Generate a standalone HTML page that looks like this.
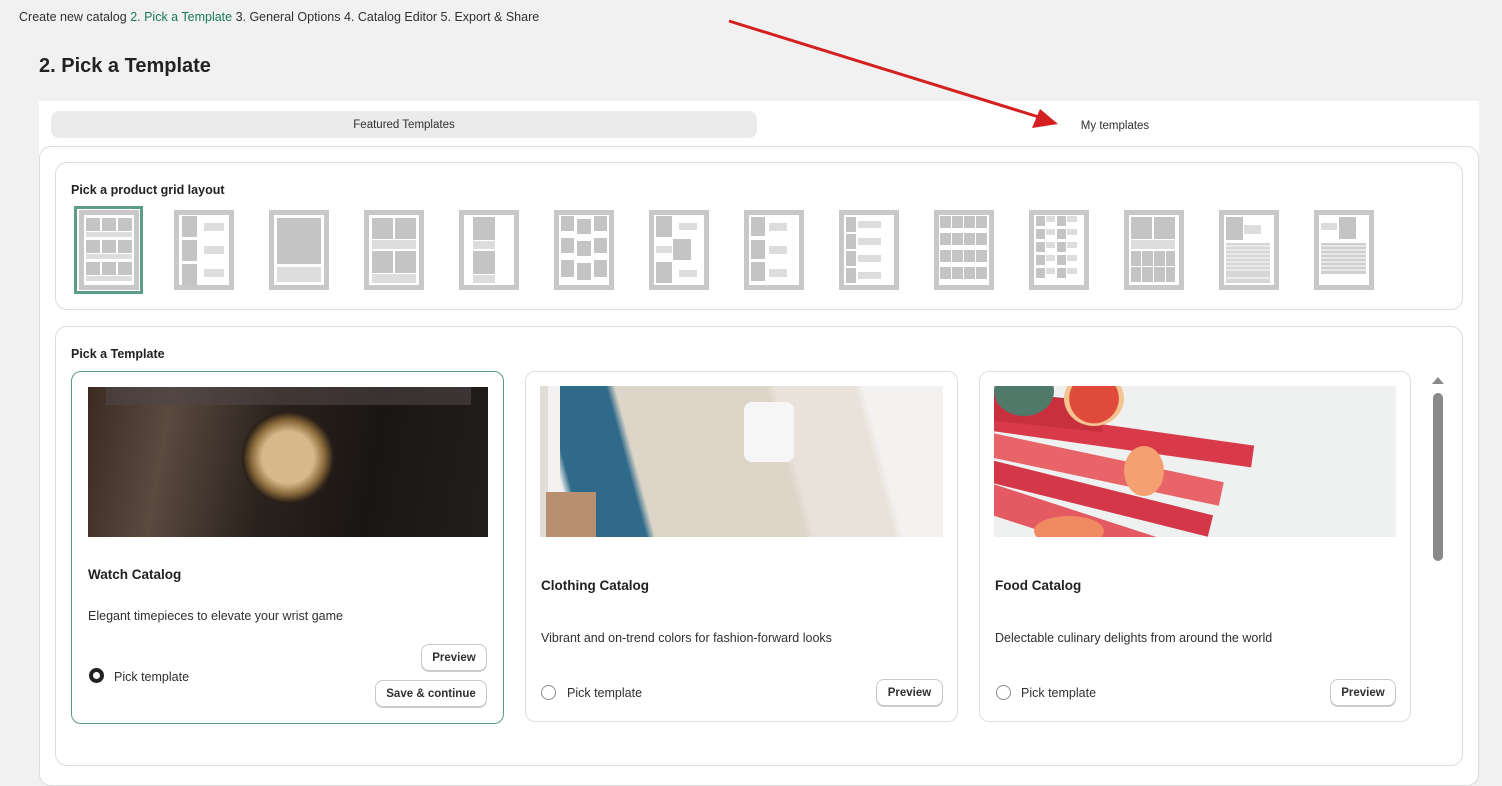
<!DOCTYPE html>
<html><head><meta charset="utf-8"><style>
*{box-sizing:border-box;margin:0;padding:0}
body{width:1502px;height:746px;overflow:hidden;background:#f1f1f1;font-family:"Liberation Sans","DejaVu Sans",sans-serif;color:#303030;position:relative}
.a{position:absolute}
.crumb{left:19px;top:10px;font-size:12.5px;color:#303030}
.crumb span{color:#1a7a5a}
h1{position:absolute;left:39px;top:55px;font-size:20px;font-weight:bold;color:#222}
.panel{left:39px;top:101px;width:1440px;height:660px;background:#fff}
.tab{left:51px;top:111px;width:706px;height:27px;background:#ebebeb;border-radius:8px;font-size:11.5px;text-align:center;line-height:29px;color:#303030}
.tab2{left:1020px;top:111px;width:190px;height:27px;font-size:11.5px;text-align:center;line-height:31px}
.outer{left:39px;top:146px;width:1440px;height:640px;border:1px solid #dcdcdc;border-radius:12px;background:#fff}
.box{background:#fff;border:1px solid #dcdcdc;border-radius:12px}
.lbl{font-size:12.5px;font-weight:bold;color:#222}
.card{background:#fff;border:1px solid #dedede;border-radius:10px}
.card h3{position:absolute;font-size:13.5px;font-weight:bold;color:#222}
.card p{position:absolute;font-size:12.5px;color:#303030}
.btn{position:absolute;border:1px solid #c9c9c9;border-radius:8px;background:#fff;font-size:11.5px;font-weight:bold;color:#303030;text-align:center;line-height:27px;height:27px;box-shadow:0 1px 0 #ccc}
.radio{position:absolute;width:15px;height:15px;border:1px solid #8a8a8a;border-radius:50%}
.rl{position:absolute;font-size:12.5px}
</style></head><body>
<div class="a crumb">Create new catalog <span>2. Pick a Template</span> 3. General Options 4. Catalog Editor 5. Export &amp; Share</div>
<h1>2. Pick a Template</h1>
<div class="a panel"></div>
<div class="a tab">Featured Templates</div>
<div class="a tab2">My templates</div>
<svg class="a" style="left:720px;top:15px" width="350" height="120"><line x1="9" y1="6" x2="322" y2="103" stroke="#d42020" stroke-width="3"/><polygon points="338,109 312,113 320,94" fill="#d42020"/></svg>
<div class="a outer"></div>
<div class="a box" style="left:55px;top:162px;width:1408px;height:148px"></div>
<div class="a lbl" style="left:71px;top:183px">Pick a product grid layout</div>
<div class="a" style="left:74px;top:206px;width:69px;height:88px;border:3px solid #5c9d89"></div>
<svg class="a" style="left:0;top:0" width="1502" height="300">
<defs>
<g id="fr"><rect x="2.5" y="2.5" width="55" height="75" fill="none" stroke="#c8c8c8" stroke-width="5"/></g>
</defs>
<g fill="#c4c4c4">
<g transform="translate(79,210)">
<rect x="7" y="8" width="14" height="13"/><rect x="23" y="8" width="14" height="13"/><rect x="39" y="8" width="14" height="13"/><rect x="7" y="22" width="46" height="5" fill="#ddd"/>
<rect x="7" y="30" width="14" height="13"/><rect x="23" y="30" width="14" height="13"/><rect x="39" y="30" width="14" height="13"/><rect x="7" y="44" width="46" height="5" fill="#ddd"/>
<rect x="7" y="52" width="14" height="13"/><rect x="23" y="52" width="14" height="13"/><rect x="39" y="52" width="14" height="13"/><rect x="7" y="66" width="46" height="5" fill="#ddd"/><use href="#fr"/></g>
<g transform="translate(174,210)">
<rect x="8" y="6" width="15" height="21"/><rect x="8" y="30" width="15" height="21"/><rect x="8" y="54" width="15" height="21"/>
<rect x="30" y="13" width="20" height="8" fill="#ddd"/><rect x="30" y="36" width="20" height="8" fill="#ddd"/><rect x="30" y="59" width="20" height="8" fill="#ddd"/><use href="#fr"/></g>
<g transform="translate(269,210)"><rect x="8" y="8" width="44" height="46"/><rect x="8" y="57" width="44" height="15" fill="#ddd"/><use href="#fr"/></g>
<g transform="translate(364,210)"><rect x="8" y="8" width="21" height="21"/><rect x="31" y="8" width="21" height="21"/><rect x="8" y="30" width="44" height="9" fill="#ddd"/><rect x="8" y="41" width="21" height="22"/><rect x="31" y="41" width="21" height="22"/><rect x="8" y="64" width="44" height="9" fill="#ddd"/><use href="#fr"/></g>
<g transform="translate(459,210)"><rect x="14" y="7" width="22" height="23"/><rect x="14" y="31" width="22" height="8" fill="#ddd"/><rect x="14" y="41" width="22" height="23"/><rect x="14" y="65" width="22" height="8" fill="#ddd"/><use href="#fr"/></g>
<g transform="translate(554,210)"><rect x="7" y="6" width="13" height="15"/><rect x="23" y="9" width="14" height="15"/><rect x="40" y="6" width="13" height="15"/><rect x="7" y="28" width="13" height="15"/><rect x="23" y="31" width="14" height="15"/><rect x="40" y="28" width="13" height="15"/><rect x="7" y="50" width="13" height="17"/><rect x="23" y="53" width="14" height="17"/><rect x="40" y="50" width="13" height="17"/><use href="#fr"/></g>
<g transform="translate(649,210)"><rect x="7" y="6" width="16" height="21"/><rect x="30" y="13" width="18" height="7" fill="#ddd"/><rect x="7" y="36" width="16" height="7" fill="#ddd"/><rect x="24" y="29" width="18" height="21"/><rect x="7" y="52" width="16" height="21"/><rect x="30" y="60" width="18" height="7" fill="#ddd"/><use href="#fr"/></g>
<g transform="translate(744,210)"><rect x="7" y="7" width="14" height="19"/><rect x="7" y="30" width="14" height="19"/><rect x="7" y="52" width="14" height="19"/><rect x="25" y="13" width="18" height="8" fill="#ddd"/><rect x="25" y="36" width="18" height="8" fill="#ddd"/><rect x="25" y="59" width="18" height="8" fill="#ddd"/><use href="#fr"/></g>
<g transform="translate(839,210)"><rect x="7" y="7" width="10" height="15"/><rect x="7" y="24" width="10" height="15"/><rect x="7" y="41" width="10" height="15"/><rect x="7" y="58" width="10" height="15"/><rect x="19" y="11" width="23" height="7" fill="#ddd"/><rect x="19" y="28" width="23" height="7" fill="#ddd"/><rect x="19" y="45" width="23" height="7" fill="#ddd"/><rect x="19" y="62" width="23" height="7" fill="#ddd"/><use href="#fr"/></g>
<g transform="translate(934,210)"><g id="r4"><rect x="6" y="6" width="11" height="12"/><rect x="18" y="6" width="11" height="12"/><rect x="30" y="6" width="11" height="12"/><rect x="42" y="6" width="11" height="12"/></g><use href="#r4" y="17"/><use href="#r4" y="34"/><use href="#r4" y="51"/><use href="#fr"/></g>
<g transform="translate(1029,210)"><g id="r5"><rect x="7" y="6" width="9" height="10"/><rect x="17" y="6" width="9" height="6" fill="#ddd"/><rect x="28" y="6" width="9" height="10"/><rect x="38" y="6" width="10" height="6" fill="#ddd"/></g><use href="#r5" y="13"/><use href="#r5" y="26"/><use href="#r5" y="39"/><use href="#r5" y="52"/><use href="#fr"/></g>
<g transform="translate(1124,210)"><rect x="7" y="7" width="21" height="22"/><rect x="30" y="7" width="21" height="22"/><rect x="7" y="30" width="44" height="9" fill="#ddd"/><rect x="7" y="41" width="10" height="15"/><rect x="18" y="41" width="11" height="15"/><rect x="30" y="41" width="11" height="15"/><rect x="42" y="41" width="9" height="15"/><rect x="7" y="57" width="10" height="15"/><rect x="18" y="57" width="11" height="15"/><rect x="30" y="57" width="11" height="15"/><rect x="42" y="57" width="9" height="15"/><use href="#fr"/></g>
<g transform="translate(1219,210)"><rect x="7" y="7" width="17" height="23"/><rect x="25" y="15" width="17" height="9" fill="#ddd"/><rect x="7" y="33" width="44" height="40" fill="#d6d6d6"/><use href="#fr"/></g>
<g transform="translate(1314,210)"><rect x="7" y="13" width="16" height="7" fill="#ddd"/><rect x="25" y="7" width="17" height="22"/><rect x="7" y="33" width="45" height="31" fill="#cfcfcf"/><use href="#fr"/></g>
</g>
<g stroke="#fff" stroke-width="1"><line x1="1226" y1="246" x2="1270" y2="246"/><line x1="1226" y1="250" x2="1270" y2="250"/><line x1="1226" y1="254" x2="1270" y2="254"/><line x1="1226" y1="258" x2="1270" y2="258"/><line x1="1226" y1="262" x2="1270" y2="262"/><line x1="1226" y1="266" x2="1270" y2="266"/><line x1="1226" y1="270" x2="1270" y2="270"/><line x1="1226" y1="278" x2="1270" y2="278"/><line x1="1321" y1="246" x2="1366" y2="246"/><line x1="1321" y1="250" x2="1366" y2="250"/><line x1="1321" y1="254" x2="1366" y2="254"/><line x1="1321" y1="258" x2="1366" y2="258"/><line x1="1321" y1="262" x2="1366" y2="262"/><line x1="1321" y1="266" x2="1366" y2="266"/><line x1="1321" y1="270" x2="1366" y2="270"/></g>
</svg>

<div class="a box" style="left:55px;top:326px;width:1408px;height:440px"></div>
<div class="a lbl" style="left:71px;top:347px">Pick a Template</div>

<div class="a card" style="left:71px;top:371px;width:433px;height:353px;border-color:#5c9d89">
 <div class="a" style="left:16px;top:15px;width:400px;height:150px;background:radial-gradient(circle at 50% 47%,#d8b88a 0 12%,#8a6a3a 17%,#2a2018 21%,transparent 22%),linear-gradient(100deg,#3a2a22 0%,#5a4a40 20%,#2a221c 45%,#1a1614 70%,#221e1c 100%)"></div>
 <div class="a" style="left:34px;top:15px;width:365px;height:18px;background:rgba(80,70,70,.6)"></div>
 <h3 style="left:16px;top:195px">Watch Catalog</h3>
 <p style="left:16px;top:237px">Elegant timepieces to elevate your wrist game</p>
 <div class="radio" style="left:17px;top:296px;border:4px solid #222"></div>
 <div class="rl" style="left:42px;top:298px">Pick template</div>
 <div class="btn" style="left:349px;top:272px;width:66px">Preview</div>
 <div class="btn" style="left:303px;top:308px;width:112px">Save &amp; continue</div>
</div>

<div class="a card" style="left:525px;top:371px;width:433px;height:351px">
 <div class="a" style="left:14px;top:14px;width:403px;height:151px;background:linear-gradient(90deg,#e0dcd6 0 2%,#f3f2f0 2% 5%,transparent 5%),linear-gradient(75deg,#f0efed 0 8%,#2f6a8a 10% 24%,#ddd5c8 26% 60%,#e8e2da 62% 80%,#f3f2f0 82%);"></div>
 <div class="a" style="left:20px;top:120px;width:50px;height:45px;background:#b89070"></div>
 <div class="a" style="left:218px;top:30px;width:50px;height:60px;background:#f6f6f6;border-radius:8px"></div>
 <h3 style="left:15px;top:206px">Clothing Catalog</h3>
 <p style="left:15px;top:259px">Vibrant and on-trend colors for fashion-forward looks</p>
 <div class="radio" style="left:15px;top:313px"></div>
 <div class="rl" style="left:41px;top:314px">Pick template</div>
 <div class="btn" style="left:350px;top:307px;width:67px">Preview</div>
</div>

<div class="a card" style="left:979px;top:371px;width:432px;height:351px">
 <div class="a" style="left:14px;top:14px;width:402px;height:151px;background:#eff1f1;overflow:hidden">
  <div class="a" style="left:-20px;top:40px;width:280px;height:22px;background:#d83a4a;transform:rotate(8deg)"></div>
  <div class="a" style="left:-20px;top:70px;width:250px;height:24px;background:#e86468;transform:rotate(12deg)"></div>
  <div class="a" style="left:-20px;top:100px;width:240px;height:22px;background:#d43848;transform:rotate(14deg)"></div>
  <div class="a" style="left:-20px;top:125px;width:200px;height:30px;background:#e55a62;transform:rotate(18deg)"></div>
  <div class="a" style="left:-10px;top:10px;width:120px;height:30px;background:#c8303e;transform:rotate(6deg)"></div>
  <div class="a" style="left:0;top:-20px;width:60px;height:50px;background:#4f7a6a;border-radius:50%"></div>
  <div class="a" style="left:70px;top:-15px;width:60px;height:55px;background:radial-gradient(circle,#e04a3a 0 60%,#f4c490 62%);border-radius:50%"></div>
  <div class="a" style="left:130px;top:60px;width:40px;height:50px;background:#f4a070;border-radius:50%"></div>
  <div class="a" style="left:40px;top:130px;width:70px;height:30px;background:#f08a60;border-radius:50%"></div>
 </div>
 <h3 style="left:15px;top:206px">Food Catalog</h3>
 <p style="left:15px;top:259px">Delectable culinary delights from around the world</p>
 <div class="radio" style="left:16px;top:313px"></div>
 <div class="rl" style="left:41px;top:314px">Pick template</div>
 <div class="btn" style="left:350px;top:307px;width:66px">Preview</div>
</div>

<svg class="a" style="left:1430px;top:375px" width="16" height="190"><polygon points="8,2 14,9 2,9" fill="#8a8a8a"/><rect x="3" y="18" width="10" height="168" rx="5" fill="#8a8a8a"/></svg>
</body></html>
